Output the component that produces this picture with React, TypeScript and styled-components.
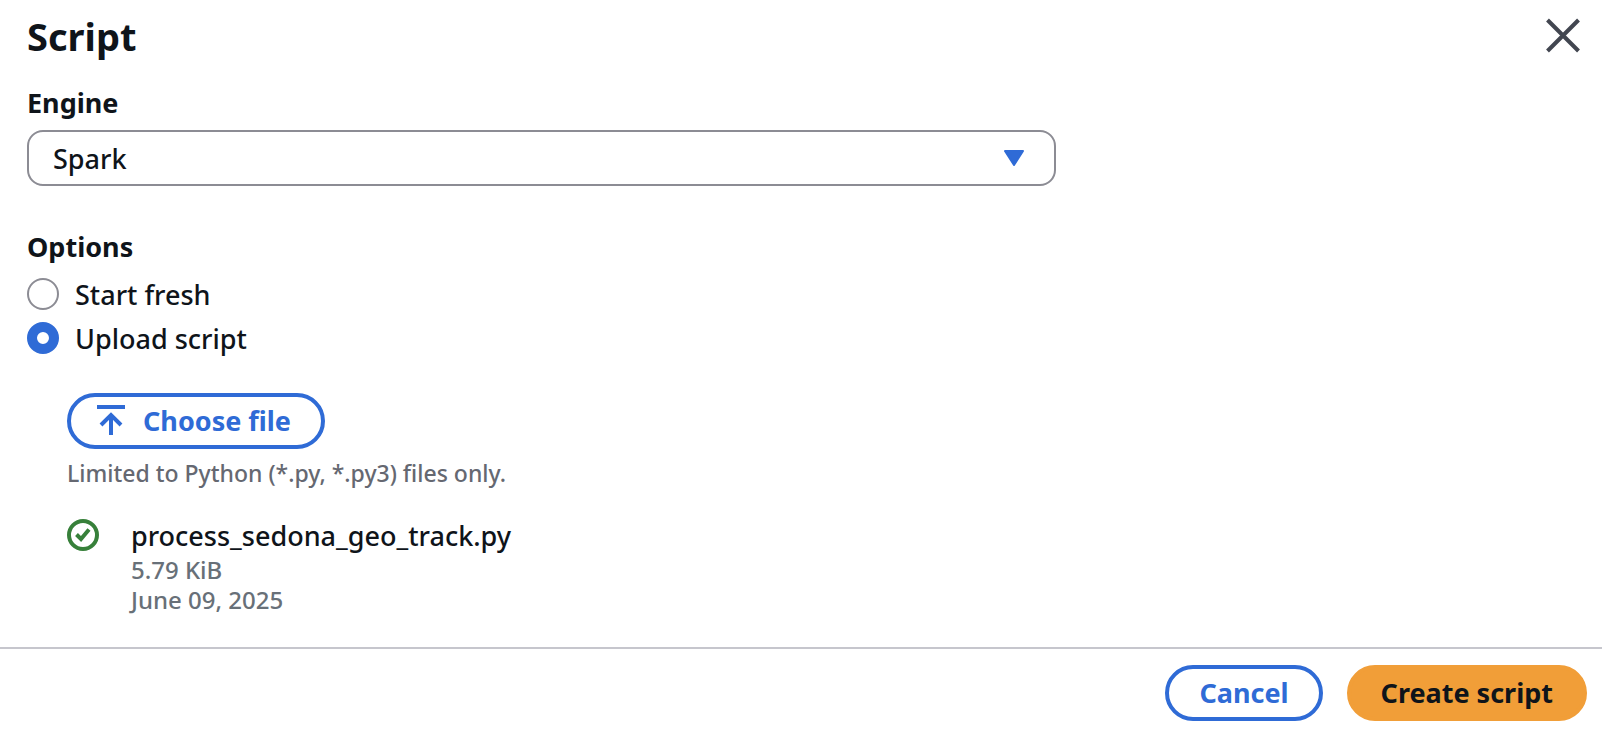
import React, { useState } from 'react';
import styled, { createGlobalStyle } from 'styled-components';

const color = {
  text: '#0f141a',
  muted: '#656871',
  meta: '#687078',
  blue: '#2f6bd6',
  green: '#37803a',
  orange: '#f19e38',
  border: '#8c8c94',
  divider: '#c6c6cd',
  close: '#424650',
};

const GlobalStyle = createGlobalStyle`
  * { box-sizing: border-box; }
  body {
    margin: 0;
    background: #fff;
    color: ${color.text};
    font-family: "Noto Sans", "Open Sans", sans-serif;
    font-size: 27px;
    font-weight: 500;
    line-height: 40px;
  }
`;

const Dialog = styled.section`
  display: flex;
  flex-direction: column;
`;

const Header = styled.header`
  display: flex;
  align-items: flex-start;
  justify-content: space-between;
  padding: 12px 16px 0 27px;
`;

const Title = styled.h1`
  margin: 0;
  font-size: 38px;
  line-height: 48px;
  font-weight: 700;
`;

const CloseButton = styled.button`
  display: flex;
  padding: 0;
  border: 0;
  background: none;
  color: ${color.close};
  cursor: pointer;
`;

const Body = styled.form`
  display: flex;
  flex-direction: column;
  gap: 41px;
  padding: 23px 27px 32px;
`;

const Field = styled.div`
  display: flex;
  flex-direction: column;
  gap: 7px;
`;

const Label = styled.label`
  font-weight: 700;
`;

const SelectBox = styled.div`
  position: relative;
  max-width: 1029px;
`;

const Select = styled.select`
  display: block;
  width: 100%;
  height: 56px;
  padding: 2px 80px 0 24px;
  border: 2px solid ${color.border};
  border-radius: 16px;
  appearance: none;
  background: #fff;
  color: inherit;
  font: inherit;
`;

const Caret = styled.svg`
  position: absolute;
  right: 32px;
  top: 20px;
  pointer-events: none;
`;

const OptionGroup = styled.fieldset`
  min-width: 0;
  margin: 0;
  padding: 0;
  border: 0;
`;

const Legend = styled.legend`
  padding: 0 0 8px;
  font-weight: 700;
`;

const OptionList = styled.div`
  display: flex;
  flex-direction: column;
  gap: 4px;
`;

const Option = styled.label`
  display: flex;
  gap: 16px;
  align-self: flex-start;
`;

const Radio = styled.input`
  appearance: none;
  flex: none;
  width: 32px;
  height: 32px;
  margin: 3px 0 0;
  border: 2px solid ${color.border};
  border-radius: 50%;
  background: #fff;

  &:checked {
    border: 10px solid ${color.blue};
  }
`;

const Upload = styled.div`
  display: flex;
  flex-direction: column;
  align-items: flex-start;
  padding: 34px 0 0 40px;
`;

const Button = styled.button<{ $primary?: boolean; $icon?: boolean }>`
  display: flex;
  align-items: center;
  gap: 16px;
  height: 56px;
  padding: ${(p) => (p.$icon ? '0 30px 0 24px' : '0 30px')};
  border: 4px solid ${(p) => (p.$primary ? color.orange : color.blue)};
  border-radius: 28px;
  background: ${(p) => (p.$primary ? color.orange : '#fff')};
  color: ${(p) => (p.$primary ? color.text : color.blue)};
  font: inherit;
  font-weight: 700;
  white-space: nowrap;
  cursor: pointer;
`;

const Hint = styled.p`
  margin: 8px 0 0;
  color: ${color.muted};
  font-size: 23px;
  line-height: 32px;
`;

const FileRow = styled.div`
  display: flex;
  gap: 32px;
  padding-top: 28px;
`;

const StatusIcon = styled.svg`
  flex: none;
  margin-top: 2px;
`;

const FileName = styled.div`
  line-height: 38px;
`;

const FileMeta = styled.div`
  color: ${color.meta};
  font-size: 24px;
  line-height: 30px;
`;

const Footer = styled.footer`
  display: flex;
  justify-content: flex-end;
  gap: 24px;
  padding: 16px 15px 10px;
  border-top: 2px solid ${color.divider};
`;

export default function App() {
  const [option, setOption] = useState('upload');

  return (
    <>
      <GlobalStyle />
      <Dialog role="dialog" aria-labelledby="dialog-title">
        <Header>
          <Title id="dialog-title">Script</Title>
          <CloseButton type="button" aria-label="Close">
            <svg width="46" height="46" viewBox="0 0 46 46" fill="none" stroke="currentColor" strokeWidth="4">
              <path d="M7.5 8L38.5 39M38.5 8L7.5 39" />
            </svg>
          </CloseButton>
        </Header>
        <Body id="script-form" onSubmit={(e) => e.preventDefault()}>
          <Field>
            <Label htmlFor="engine">Engine</Label>
            <SelectBox>
              <Select id="engine" defaultValue="spark">
                <option value="spark">Spark</option>
              </Select>
              <Caret width="20" height="17" viewBox="0 0 20 17" fill={color.blue} stroke={color.blue} strokeWidth="2" strokeLinejoin="round" aria-hidden="true">
                <path d="M1 1H19L10 15Z" />
              </Caret>
            </SelectBox>
          </Field>
          <OptionGroup>
            <Legend>Options</Legend>
            <OptionList>
              <Option>
                <Radio type="radio" name="option" checked={option === 'fresh'} onChange={() => setOption('fresh')} />
                Start fresh
              </Option>
              <Option>
                <Radio type="radio" name="option" checked={option === 'upload'} onChange={() => setOption('upload')} />
                Upload script
              </Option>
            </OptionList>
            <Upload>
              <Button type="button" $icon>
                <svg width="32" height="32" viewBox="0 0 32 32" fill="none" stroke="currentColor" strokeWidth="4" aria-hidden="true">
                  <path d="M2 2H30M16 30V11M6 20L16 10L26 20" />
                </svg>
                Choose file
              </Button>
              <Hint>Limited to Python (*.py, *.py3) files only.</Hint>
              <FileRow>
                <StatusIcon width="32" height="32" viewBox="0 0 32 32" fill="none" stroke={color.green} strokeWidth="4" aria-hidden="true">
                  <circle cx="16" cy="16" r="14" />
                  <path d="M9.500 15.500L14 20L22 10.500" />
                </StatusIcon>
                <div>
                  <FileName>process_sedona_geo_track.py</FileName>
                  <FileMeta>5.79 KiB</FileMeta>
                  <FileMeta>June 09, 2025</FileMeta>
                </div>
              </FileRow>
            </Upload>
          </OptionGroup>
        </Body>
        <Footer>
          <Button type="button">Cancel</Button>
          <Button type="submit" form="script-form" $primary>
            Create script
          </Button>
        </Footer>
      </Dialog>
    </>
  );
}
